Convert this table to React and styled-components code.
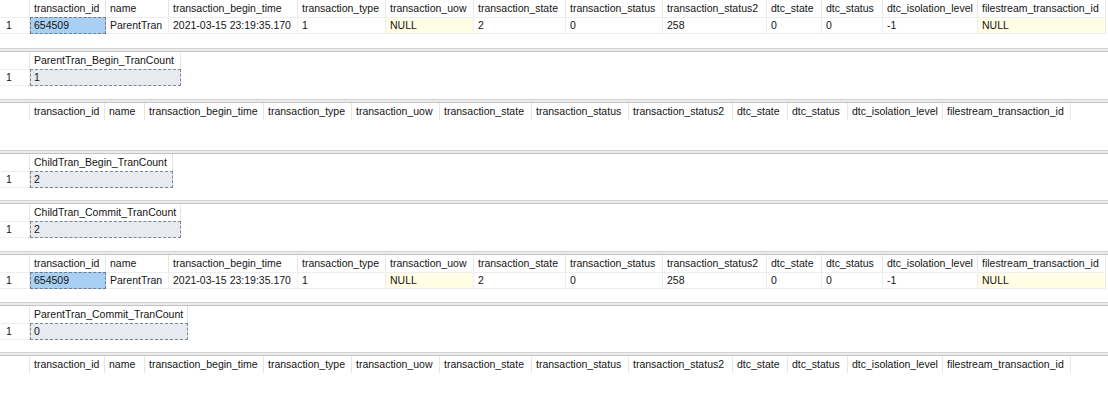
import React from "react";
import styled, { createGlobalStyle, css } from "styled-components";

const GlobalStyle = createGlobalStyle`
  html, body { margin: 0; padding: 0; background: #ffffff; }
  body {
    font-family: "Liberation Sans", Arial, sans-serif;
    font-size: 10.5px;
    color: #141414;
    overflow: hidden;
  }
`;

const Page = styled.div`
  display: flex;
  flex-direction: column;
  width: 1108px;
  height: 393px;
  overflow: hidden;
`;

const Splitter = styled.div`
  flex: 0 0 auto;
  height: 4px;
  box-sizing: border-box;
  border-top: 1px solid #d2d2d2;
  border-bottom: 1px solid #c2c2c2;
  background: #ececec;
`;

const Panel = styled.div`
  flex: 0 0 auto;
  height: ${(p) => p.$h}px;
  display: flex;
  flex-direction: column;
  overflow: hidden;
`;

const Row = styled.div`
  display: flex;
  flex: 0 0 auto;
  height: 17px;
`;

const HeaderCell = styled.div`
  box-sizing: border-box;
  width: ${(p) => p.$w}px;
  flex: 0 0 auto;
  height: 17px;
  line-height: 17px;
  padding-left: 4px;
  border-right: 1px solid #e6e6e6;
  white-space: nowrap;
  overflow: hidden;
  background: #ffffff;
`;

const CornerCell = styled(HeaderCell)`
  padding: 0;
`;

const Cell = styled.div`
  box-sizing: border-box;
  width: ${(p) => p.$w}px;
  flex: 0 0 auto;
  height: 17px;
  line-height: 15px;
  padding-left: 4px;
  border-right: 1px solid #eeeeee;
  border-bottom: 1px solid #eeeeee;
  border-top: 1px solid #eeeeee;
  white-space: nowrap;
  overflow: hidden;
  ${(p) =>
    p.$kind === "null" &&
    css`
      background: #fffde3;
    `}
  ${(p) =>
    p.$kind === "selected" &&
    css`
      background: #a9d0f3;
      border: 1px dashed #6c7c8c;
      padding-left: 3px;
    `}
  ${(p) =>
    p.$kind === "focus" &&
    css`
      background: #e7ebf0;
      border: 1px dashed #7e8690;
      padding-left: 3px;
    `}
`;

const RowNumCell = styled(Cell)`
  padding-left: 6px;
`;

const txCols = [
  "transaction_id",
  "name",
  "transaction_begin_time",
  "transaction_type",
  "transaction_uow",
  "transaction_state",
  "transaction_status",
  "transaction_status2",
  "dtc_state",
  "dtc_status",
  "dtc_isolation_level",
  "filestream_transaction_id",
];

const fullWidths = [76, 63, 129, 88, 88, 92, 97, 104, 55, 61, 95, 128];
const emptyWidths = [75, 40, 119, 88, 88, 92, 97, 104, 55, 60, 95, 128];

const txRow = [
  { v: "654509", k: "selected" },
  { v: "ParentTran" },
  { v: "2021-03-15 23:19:35.170" },
  { v: "1" },
  { v: "NULL", k: "null" },
  { v: "2" },
  { v: "0" },
  { v: "258" },
  { v: "0" },
  { v: "0" },
  { v: "-1" },
  { v: "NULL", k: "null" },
];

function TxGrid({ rows, widths, h }) {
  return (
    <Panel $h={h}>
      <Row>
        <CornerCell $w={30} />
        {txCols.map((c, i) => (
          <HeaderCell key={c} $w={widths[i]}>
            {c}
          </HeaderCell>
        ))}
      </Row>
      {rows.map((r, ri) => (
        <Row key={ri}>
          <RowNumCell $w={30}>{ri + 1}</RowNumCell>
          {r.map((c, i) => (
            <Cell key={i} $w={widths[i]} $kind={c.k}>
              {c.v}
            </Cell>
          ))}
        </Row>
      ))}
    </Panel>
  );
}

function CountGrid({ title, value, w, h }) {
  return (
    <Panel $h={h}>
      <Row>
        <CornerCell $w={30} />
        <HeaderCell $w={w}>{title}</HeaderCell>
      </Row>
      <Row>
        <RowNumCell $w={30}>1</RowNumCell>
        <Cell $w={w} $kind="focus">
          {value}
        </Cell>
      </Row>
    </Panel>
  );
}

export default function App() {
  return (
    <>
      <GlobalStyle />
      <Page>
        <TxGrid rows={[txRow]} widths={fullWidths} h={48} />
        <Splitter />
        <CountGrid title="ParentTran_Begin_TranCount" value="1" w={151} h={47} />
        <Splitter />
        <TxGrid rows={[]} widths={emptyWidths} h={47} />
        <Splitter />
        <CountGrid title="ChildTran_Begin_TranCount" value="2" w={143} h={46} />
        <Splitter />
        <CountGrid title="ChildTran_Commit_TranCount" value="2" w={151} h={47} />
        <Splitter />
        <TxGrid rows={[txRow]} widths={fullWidths} h={47} />
        <Splitter />
        <CountGrid title="ParentTran_Commit_TranCount" value="0" w={158} h={46} />
        <Splitter />
        <TxGrid rows={[]} widths={emptyWidths} h={40} />
      </Page>
    </>
  );
}
